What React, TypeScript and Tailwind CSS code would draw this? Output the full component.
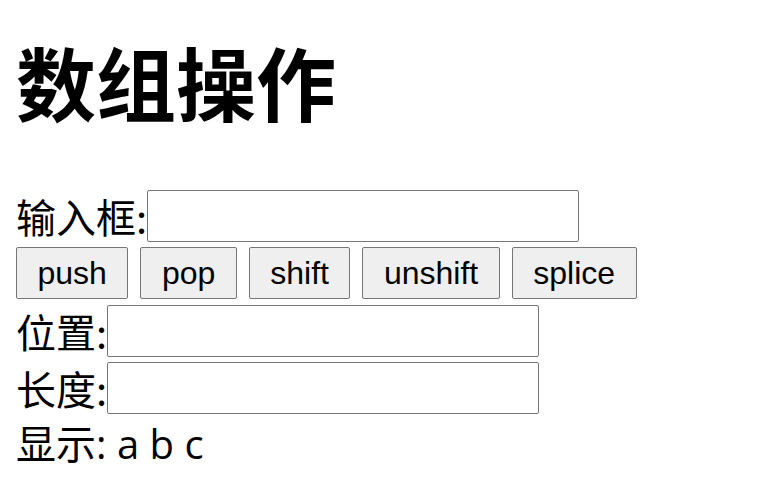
import React from "react";

const App = () => {
  const ops = ["push", "pop", "shift", "unshift", "splice"];

  return (
    <div className="bg-white text-black px-4 pb-6 font-['Noto_Sans_CJK_SC',sans-serif] text-[40px] leading-none">
      <h1 className="mt-[40px] mb-[70px] text-[80px] font-bold leading-none">数组操作</h1>

      {/* 输入框 */}
      <div className="flex items-center h-[52px]">
        <span>输入框:</span>
        <input type="text" className="w-[432px] h-[52px] border border-[#767676] rounded-[2px] bg-white" />
      </div>

      {/* 按钮 */}
      <div className="flex gap-3 mt-[5px]">
        {ops.map((op) => (
          <button
            key={op}
            className="h-[52px] px-[20.5px] border border-[#767676] rounded-[2px] bg-[#efefef] font-['Liberation_Sans',Arial,sans-serif] text-[32px] leading-none"
          >
            {op}
          </button>
        ))}
      </div>

      <div className="flex items-center h-[52px] mt-[6px]">
        <span>位置:</span>
        <input type="text" className="w-[432px] h-[52px] border border-[#767676] rounded-[2px] bg-white" />
      </div>

      <div className="flex items-center h-[52px] mt-[5px]">
        <span>长度:</span>
        <input type="text" className="w-[432px] h-[52px] border border-[#767676] rounded-[2px] bg-white" />
      </div>

      <div className="mt-[10px] font-['Open_Sans','Noto_Sans_CJK_SC',sans-serif]">显示: a b c</div>
    </div>
  );
};

export default App;
